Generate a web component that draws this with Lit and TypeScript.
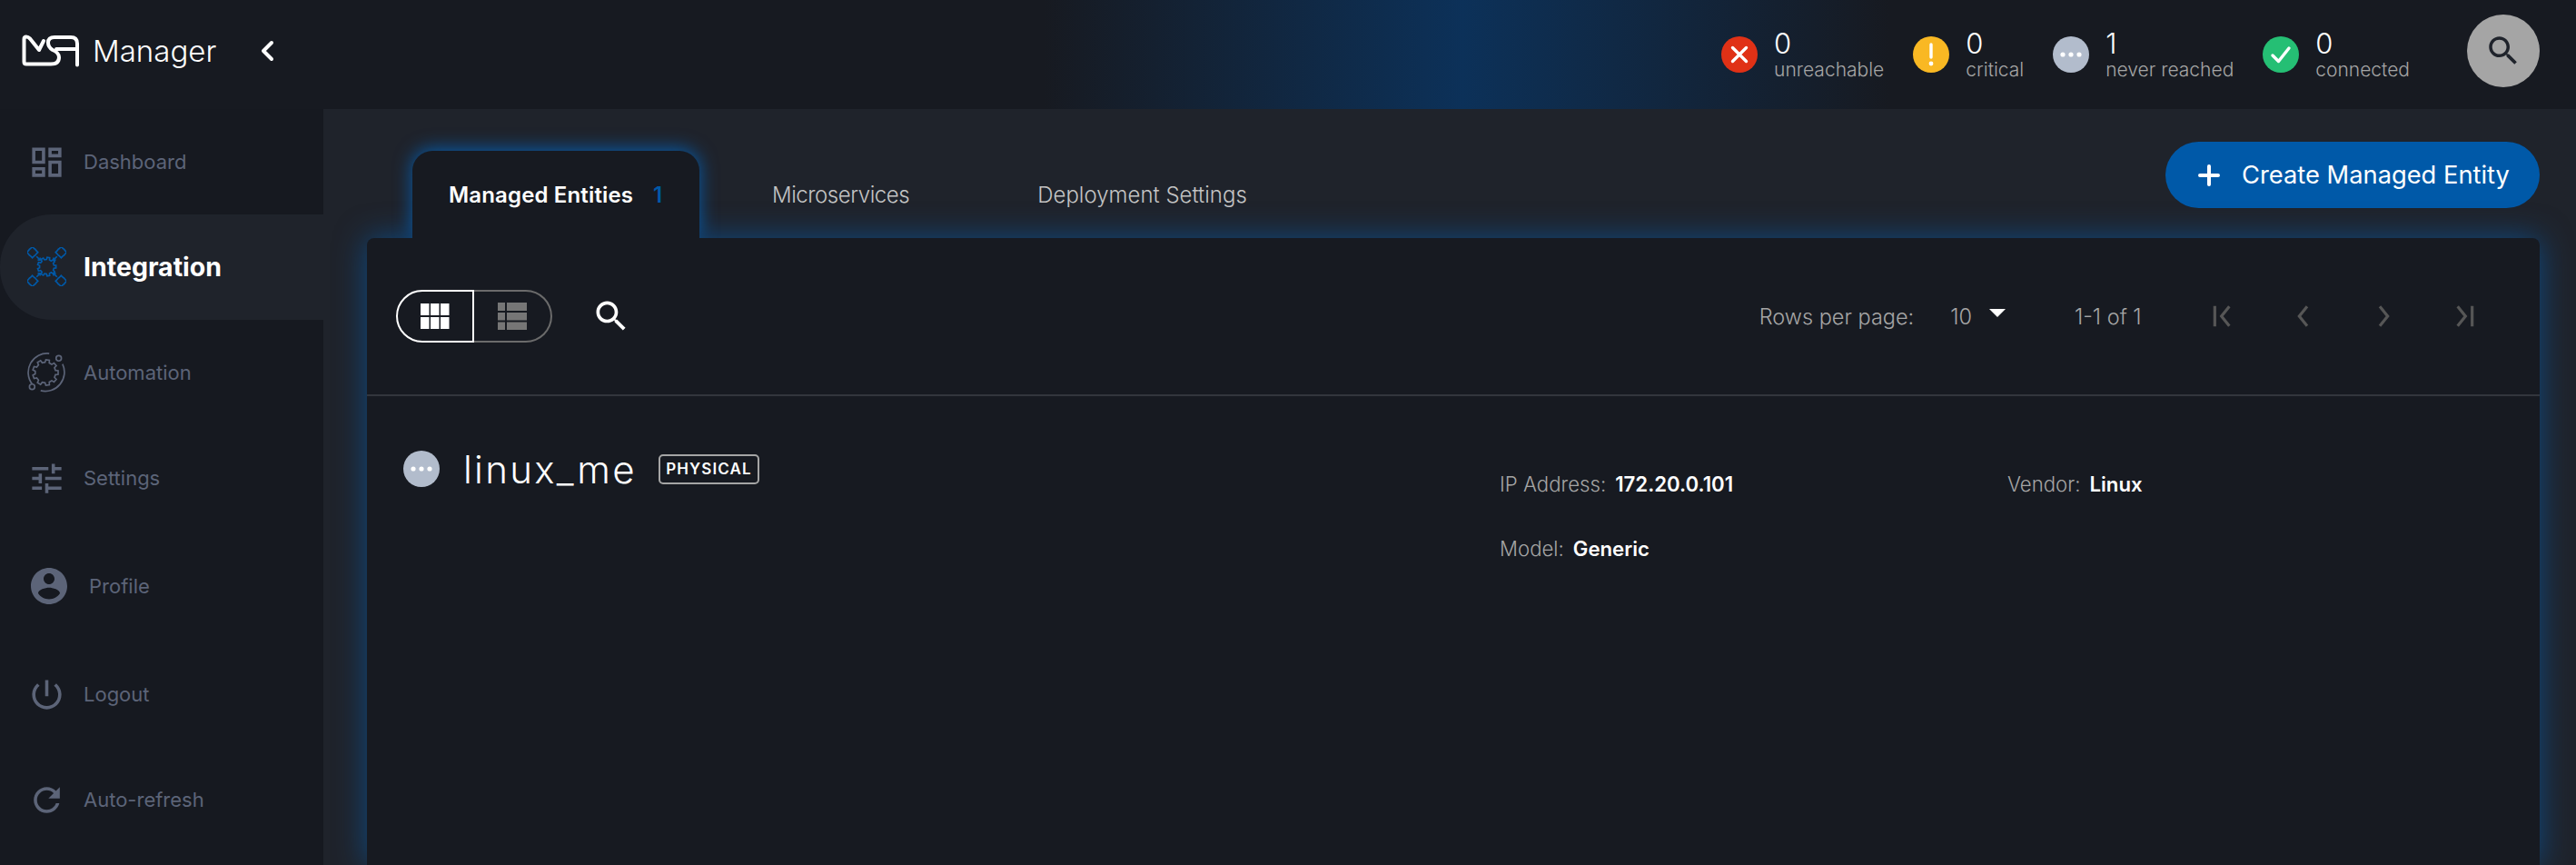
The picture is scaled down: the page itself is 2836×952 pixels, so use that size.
import { LitElement, html, css } from 'lit';
import { customElement } from 'lit/decorators.js';

const mat = (d: string, cls = '') => html`<svg class=${cls} viewBox="0 0 24 24"><path d=${d}></path></svg>`;

// cog outline, used by the two custom nav icons
const gear = (cx: number, cy: number, outer: number, inner: number, teeth: number) => {
  const pts: string[] = [];
  const step = (Math.PI * 2) / teeth;
  for (let i = 0; i < teeth; i++) {
    const a = i * step;
    const at = (r: number, off: number) =>
      `${(cx + r * Math.cos(a + off * step)).toFixed(2)} ${(cy + r * Math.sin(a + off * step)).toFixed(2)}`;
    pts.push(at(inner, -0.3), at(outer, -0.2), at(outer, 0.2), at(inner, 0.3));
  }
  return `M${pts.join('L')}Z`;
};

const logo = html`<svg class="logo" viewBox="26 37 64 36">
  <path d="M50 44 L45 54 L35 41.5 Q33 39.5 31 39.5 Q28.5 39.5 28.5 42 V67 Q28.5 69.5 31 69.5 H58 Q67 69.5 67 62 Q67 57 60 54 Q55 51 55 46 Q55 40 62 40 H80 Q87 40 87 47 V70.5"></path>
  <path d="M64 53 H87"></path>
</svg>`;

const diamond = (x: number, y: number) =>
  `M${x} ${y - 6} l2.2 2.2 l1 .6 l.6 1 l2.2 2.2 l-2.2 2.2 l-.6 1 l-1 .6 l-2.2 2.2 l-2.2 -2.2 l-1 -.6 l-.6 -1 l-2.2 -2.2 l2.2 -2.2 l.6 -1 l1 -.6 Z`;

const integrationIcon = html`<svg class="custom blue" viewBox="0 0 42 42">
  <path d=${gear(21, 21, 10, 7.8, 9)}></path>
  <path d=${diamond(5.5, 5.5)}></path>
  <path d=${diamond(36.5, 5.5)}></path>
  <path d=${diamond(5.5, 36.5)}></path>
  <path d=${diamond(36.5, 36.5)}></path>
  <path d="M10 10 L13.6 13.6 M32 10 L28.4 13.6 M10 32 L13.6 28.4 M32 32 L28.4 28.4"></path>
  <path d="M13.8 11.2 V13.8 H11.2 M28.2 11.2 V13.8 H30.8 M13.8 30.8 V28.2 H11.2 M28.2 30.8 V28.2 H30.8"></path>
</svg>`;

const automationIcon = html`<svg class="custom grey" viewBox="0 0 42 42">
  <path d=${gear(21, 21, 13.5, 10.8, 9)}></path>
  <path d="M25 1 A20 20 0 0 0 7 33"></path>
  <path d="M39 12 A20 20 0 0 1 16 40"></path>
  <circle cx="35" cy="6" r="2.8"></circle>
  <circle cx="7" cy="36" r="2.8"></circle>
</svg>`;

const navItems = [
  { label: 'Dashboard', icon: mat('M19 5v2h-4V5h4M9 5v6H5V5h4m10 8v6h-4v-6h4M9 17v2H5v-2h4M21 3h-8v6h8V3zM11 3H3v10h8V3zm10 8h-8v10h8V11zm-10 4H3v6h8v-6z') },
  { label: 'Integration', icon: integrationIcon, active: true },
  { label: 'Automation', icon: automationIcon },
  { label: 'Settings', icon: mat('M3 17v2h6v-2H3zM3 5v2h10V5H3zm10 16v-2h8v-2h-8v-2h-2v6h2zM7 9v2H3v2h4v2h2V9H7zm14 4v-2H11v2h10zm-6-4h2V7h4V5h-4V3h-2v6z') },
  { label: 'Profile', cls: 'shift', icon: mat('M12 2C6.48 2 2 6.48 2 12s4.48 10 10 10 10-4.48 10-10S17.52 2 12 2zm0 3c1.66 0 3 1.34 3 3s-1.34 3-3 3-3-1.34-3-3 1.34-3 3-3zm0 14.2c-2.5 0-4.71-1.28-6-3.22.03-1.99 4-3.08 6-3.08 1.99 0 5.97 1.09 6 3.08-1.29 1.94-3.5 3.22-6 3.22z') },
  { label: 'Logout', cls: 'gap', icon: mat('M13 3h-2v10h2V3zm4.83 2.17l-1.42 1.42C17.99 7.86 19 9.81 19 12c0 3.87-3.13 7-7 7s-7-3.13-7-7c0-2.19 1.01-4.14 2.58-5.42L6.17 5.17C4.23 6.82 3 9.26 3 12c0 4.97 4.03 9 9 9s9-4.03 9-9c0-2.74-1.23-5.18-3.17-6.83z') },
  { label: 'Auto-refresh', icon: mat('M17.65 6.35C16.2 4.9 14.21 4 12 4c-4.42 0-7.99 3.58-7.99 8s3.57 8 7.99 8c3.73 0 6.84-2.55 7.73-6h-2.08c-.82 2.33-3.04 4-5.65 4-3.31 0-6-2.69-6-6s2.69-6 6-6c1.66 0 3.14.69 4.22 1.78L13 11h7V4l-2.35 2.35z') },
];

const dots = html`<svg viewBox="0 0 40 40"><circle cx="11" cy="20" r="2.6"></circle><circle cx="20" cy="20" r="2.6"></circle><circle cx="29" cy="20" r="2.6"></circle></svg>`;

const stats = [
  { n: 0, label: 'unreachable', cls: 'red', icon: html`<svg viewBox="0 0 40 40"><path class="st" d="M12.5 12.5 L27.5 27.5 M27.5 12.5 L12.5 27.5"></path></svg>` },
  { n: 0, label: 'critical', cls: 'yellow', icon: html`<svg viewBox="0 0 40 40"><path class="st" d="M20 9 V23"></path><circle cx="20" cy="30" r="2.4"></circle></svg>` },
  { n: 1, label: 'never reached', cls: 'slate', icon: dots },
  { n: 0, label: 'connected', cls: 'green', icon: html`<svg viewBox="0 0 40 40"><path class="st" d="M11 21 L17.5 27.5 L29 13"></path></svg>` },
];

const searchPath = 'M15.5 14h-.79l-.28-.27C15.41 12.59 16 11.11 16 9.5 16 5.91 13.09 3 9.5 3S3 5.91 3 9.5 5.91 16 9.5 16c1.61 0 3.09-.59 4.23-1.57l.27.28v.79l5 4.99L20.49 19l-4.99-5zm-6 0C7.01 14 5 11.99 5 9.5S7.01 5 9.5 5 14 7.01 14 9.5 11.99 14 9.5 14z';

const pager = [
  'M4 3.5 V20.5 M16 4 L9.5 12 L16 20',
  'M15 4 L8.5 12 L15 20',
  'M9 4 L15.5 12 L9 20',
  'M8 4 L14.5 12 L8 20 M20 3.5 V20.5',
];

@customElement('app-root')
export class AppRoot extends LitElement {
  static styles = css`
    :host {
      display: block;
      width: 2836px;
      height: 952px;
      overflow: hidden;
      background: #161920;
      font-family: Inter, 'Liberation Sans', sans-serif;
      color: #fff;
    }
    svg { display: block; flex: none; }

    header {
      height: 120px;
      box-sizing: border-box;
      display: flex;
      align-items: center;
      padding: 0 40px 8px 25px;
      background: linear-gradient(90deg, #171a21 1150px, #0c3159 1610px, #171a21 2080px);
    }
    .logo { width: 64px; height: 36px; margin-left: -1px; }
    .logo path { fill: none; stroke: #fff; stroke-width: 4; stroke-linecap: round; stroke-linejoin: round; }
    .brand { font-size: 33px; font-weight: 300; margin-left: 14px; }
    .collapse { width: 20px; height: 26px; margin-left: 46px; }
    .collapse path { fill: none; stroke: #fff; stroke-width: 4; stroke-linecap: round; stroke-linejoin: round; }

    .stats { margin: 8px 0 0 auto; display: flex; gap: 32px; }
    .stat { display: flex; align-items: center; gap: 18px; }
    .stat .dot { margin-top: -1px; }
    .dot { width: 40px; height: 40px; border-radius: 50%; }
    .dot svg { width: 40px; height: 40px; }
    .dot circle { fill: #fff; }
    .dot .st { fill: none; stroke: #fff; stroke-width: 3.4; stroke-linecap: round; stroke-linejoin: round; }
    .red { background: #e03116; }
    .yellow { background: #f9b823; }
    .slate { background: #b2bccc; }
    .green { background: #25bf74; }
    .count { font-size: 31px; font-weight: 300; line-height: 34px; }
    .caption { font-size: 21px; font-weight: 300; line-height: 24px; color: #a5a5a5; }
    .global-search {
      width: 80px; height: 80px; border-radius: 50%;
      background: #a5a5a5; margin-left: 63px;
      display: flex; align-items: center; justify-content: center;
    }
    .global-search svg { width: 42px; height: 42px; fill: #1f232b; }

    .body { display: flex; height: 832px; }

    nav { width: 356px; flex: none; }
    .item {
      height: 116px;
      display: flex;
      align-items: center;
      font-size: 22px;
      color: #5c6478;
    }
    .item .slot { width: 92px; flex: none; display: flex; justify-content: center; padding-left: 10px; box-sizing: border-box; }
    .item svg { width: 43px; height: 43px; fill: #5c6478; }
    .item.active {
      background: #1f232b;
      border-radius: 57px 0 0 57px;
      color: #fff;
      font-size: 28.5px;
      font-weight: 700;
      padding-bottom: 2px;
      height: 114px;
    }
    .item.shift { margin-top: 3px; }
    .item.shift .slot { width: 98px; padding-left: 10px; }
    .item.shift svg { width: 48px; height: 48px; }
    .item.gap { margin-top: 3px; }
    .custom path, .custom circle { fill: none; stroke-width: 1.6; }
    .item svg.blue { fill: none; stroke: #0059a8; }
    .item svg.grey { fill: none; stroke: #5c6478; width: 44px; height: 44px; margin-left: -2px; }

    main {
      flex: 1;
      min-width: 0;
      background: #1f232b;
      padding: 0 40px 0 48px;
      display: flex;
      flex-direction: column;
    }
    .top { height: 142px; flex: none; display: flex; align-items: flex-end; }
    .tabs { display: flex; align-items: stretch; height: 96px; margin-left: 50px; }
    .tab {
      display: flex; align-items: center;
      font-size: 24px;
      font-weight: 300;
      color: #c4c4c4;
    }
    .tab.first { margin-left: 80px; letter-spacing: -0.45px; }
    .tab.last { margin-left: 141px; }
    .tab.current {
      position: relative;
      z-index: 2;
      width: 316px;
      box-sizing: border-box;
      padding: 0 0 0 40px;
      background: #171a21;
      border-radius: 22px 22px 0 0;
      color: #fff;
      font-weight: 600;
      letter-spacing: 0.15px;
      box-shadow: 0 -2px 20px rgba(0, 105, 200, 0.8);
      clip-path: inset(-40px -40px 0 -40px);
    }
    .tab b { color: #0059a8; font-weight: 600; margin-left: 22px; }
    .create {
      margin: 36px 0 0 auto;
      align-self: flex-start;
      width: 412px; height: 73px;
      box-sizing: border-box;
      border-radius: 37px;
      background: #0059a8;
      display: flex; align-items: center;
      padding-left: 36px;
      gap: 24px;
      font-size: 27.3px;
      font-weight: 400;
    }
    .create svg { width: 24px; height: 24px; }
    .create path { stroke: #fff; stroke-width: 4; stroke-linecap: round; fill: none; }

    .card {
      flex: 1;
      background: #171a21;
      border-radius: 8px 8px 0 0;
      box-shadow: 0 0 34px rgba(0, 105, 200, 0.55);
      position: relative;
      z-index: 1;
    }
    .toolbar {
      height: 174px;
      box-sizing: border-box;
      border-bottom: 2px solid #33363d;
      display: flex;
      align-items: center;
      padding: 0 0 0 32px;
    }
    .toggle { display: flex; height: 58px; }
    .toggle div { display: flex; align-items: center; justify-content: center; box-sizing: border-box; height: 58px; }
    .toggle .on { width: 86px; border: 2.5px solid #fff; border-radius: 29px 0 0 29px; }
    .toggle .off { width: 86px; border: 2.5px solid #6b6b6b; border-left: 0; border-radius: 0 29px 29px 0; }
    .toggle svg { width: 32px; height: 30px; }
    .toggle .on rect { fill: #fff; }
    .toggle .off rect { fill: #767676; }
    .find { width: 44px; height: 44px; fill: #fff; margin-left: 43px; }

    .paging { margin-left: auto; display: flex; align-items: center; font-size: 23.5px; font-weight: 300; color: #a5a5a5; }
    .size { margin-left: 40px; }
    .caret { width: 0; height: 0; border: 9px solid transparent; border-top: 9px solid #fff; border-bottom: 0; margin: -8px 0 0 19px; }
    .range { margin-left: 76px; }
    .pages { display: flex; gap: 55.6px; margin: 0 68.6px 0 75px; }
    .pages svg { width: 32px; height: 32px; }
    .pages path { fill: none; stroke: #565656; stroke-width: 2.4; }

    .row { display: grid; grid-template-columns: 1207px 559px 1fr; padding: 86px 0 0 40px; }
    .head { display: flex; align-items: center; grid-row: span 2; align-self: start; margin-top: -26px; height: 40px; }
    .head .dot { margin: 0 26px 0 0; }
    .name { font-size: 42px; font-weight: 300; letter-spacing: 2.3px; }
    .badge {
      margin-left: 24px;
      height: 33px;
      box-sizing: border-box;
      width: 111px;
      border: 2px solid #a5a5a5;
      border-radius: 5px;
      font-size: 17px;
      font-weight: 600;
      letter-spacing: 1.1px;
      display: flex; align-items: center; justify-content: center;
    }
    .field { font-size: 22.2px; font-weight: 300; color: #a5a5a5; height: 74px; margin-top: -3px; }
    .field strong { color: #fff; font-weight: 600; margin-left: 10px; }
  `;

  render() {
    return html`
      <header>
        ${logo}
        <span class="brand">Manager</span>
        <svg class="collapse" viewBox="0 0 20 26"><path d="M15 4 L6 13 L15 22"></path></svg>
        <div class="stats">
          ${stats.map(s => html`
            <div class="stat">
              <div class="dot ${s.cls}">${s.icon}</div>
              <div>
                <div class="count">${s.n}</div>
                <div class="caption">${s.label}</div>
              </div>
            </div>
          `)}
        </div>
        <div class="global-search">${mat(searchPath)}</div>
      </header>
      <div class="body">
        <nav>
          ${navItems.map(i => html`
            <div class="item ${i.active ? 'active' : ''} ${i.cls ?? ''}">
              <div class="slot">${i.icon}</div>
              <span>${i.label}</span>
            </div>
          `)}
        </nav>
        <main>
          <div class="top">
            <div class="tabs">
              <div class="tab current">Managed Entities<b>1</b></div>
              <div class="tab first">Microservices</div>
              <div class="tab last">Deployment Settings</div>
            </div>
            <div class="create">
              <svg viewBox="0 0 24 24"><path d="M12 2 V22 M2 12 H22"></path></svg>
              <span>Create Managed Entity</span>
            </div>
          </div>
          <section class="card">
            <div class="toolbar">
              <div class="toggle">
                <div class="on">
                  <svg viewBox="0 0 32 30">
                    <rect x="0" y="1" width="9.5" height="13"></rect><rect x="11" y="1" width="9.5" height="13"></rect><rect x="22" y="1" width="9.5" height="13"></rect>
                    <rect x="0" y="16" width="9.5" height="13"></rect><rect x="11" y="16" width="9.5" height="13"></rect><rect x="22" y="16" width="9.5" height="13"></rect>
                  </svg>
                </div>
                <div class="off">
                  <svg viewBox="0 0 32 30">
                    <rect x="0" y="0" width="8" height="9"></rect><rect x="10" y="0" width="22" height="9"></rect>
                    <rect x="0" y="11" width="8" height="8.5"></rect><rect x="10" y="11" width="22" height="8.5"></rect>
                    <rect x="0" y="21.5" width="8" height="8.5"></rect><rect x="10" y="21.5" width="22" height="8.5"></rect>
                  </svg>
                </div>
              </div>
              ${mat(searchPath, 'find')}
              <div class="paging">
                <span>Rows per page:</span>
                <span class="size">10</span>
                <span class="caret"></span>
                <span class="range">1-1 of 1</span>
                <div class="pages">
                  ${pager.map(d => html`<svg viewBox="0 0 24 24"><path d=${d}></path></svg>`)}
                </div>
              </div>
            </div>
            <div class="row">
              <div class="head">
                <div class="dot slate">${dots}</div>
                <span class="name">linux_me</span>
                <span class="badge">PHYSICAL</span>
              </div>
              <div class="field">IP Address:<strong>172.20.0.101</strong></div>
              <div class="field">Vendor:<strong>Linux</strong></div>
              <div class="field">Model:<strong>Generic</strong></div>
            </div>
          </section>
        </main>
      </div>
    `;
  }
}
